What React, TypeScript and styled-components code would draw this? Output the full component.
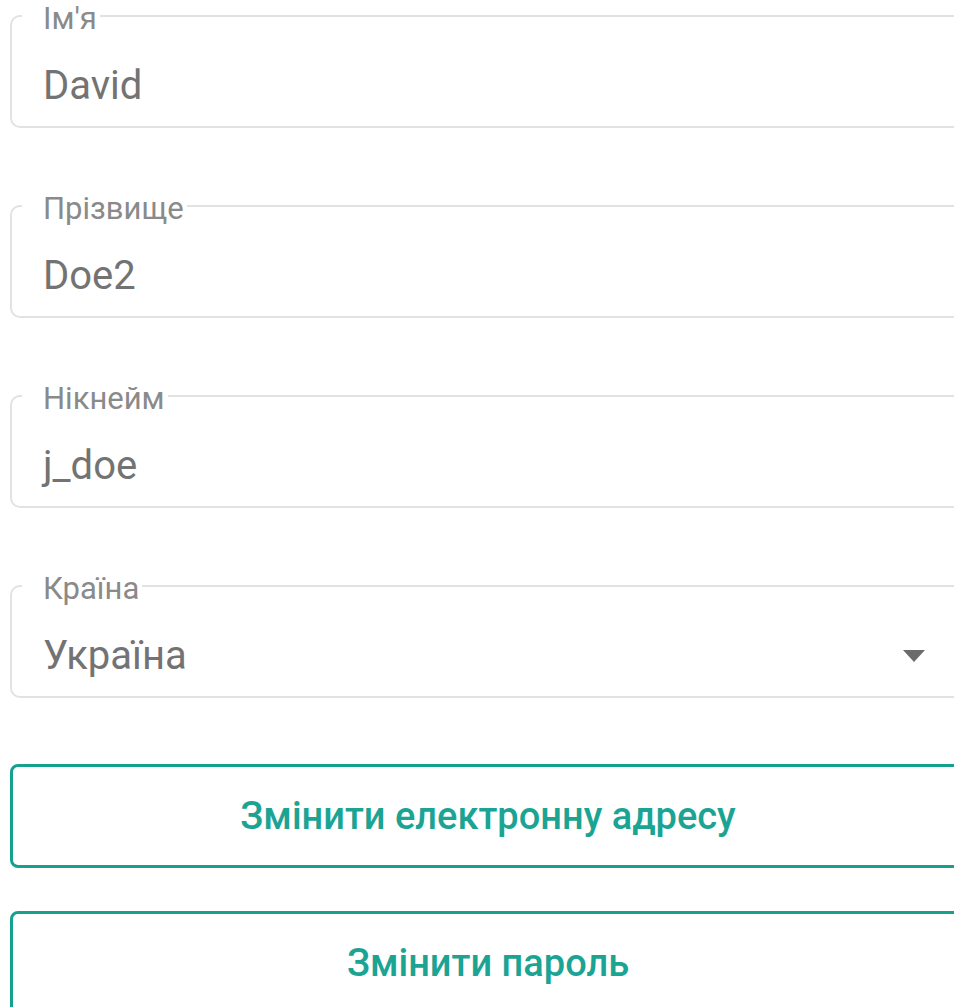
import styled, { createGlobalStyle } from 'styled-components';

const GlobalStyle = createGlobalStyle`
  html, body {
    margin: 0;
    padding: 0;
    background: #ffffff;
    overflow: hidden;
  }
  body {
    font-family: Roboto, 'Noto Sans', sans-serif;
  }
`;

const ProfileForm = styled.form`
  display: flex;
  flex-direction: column;
  width: 956px;
  margin-left: 10px;
  padding-top: 1px;
`;

const FieldList = styled.div`
  display: flex;
  flex-direction: column;
  gap: 63px;
`;

const Outline = styled.fieldset`
  margin: 0;
  padding: 0 0 0 10px;
  min-width: 0;
  border: 2px solid #e2e2e2;
  border-radius: 10px;
`;

const Legend = styled.legend`
  padding: 6px 3px 0 21px;
  font-size: 31px;
  line-height: 24px;
  color: #8a8a8a;
  white-space: nowrap;
`;

const ValueRow = styled.div`
  display: flex;
  align-items: center;
  justify-content: space-between;
  padding: 31px 39px 16px 21px;
`;

const Value = styled.span`
  font-size: 40px;
  line-height: 48px;
  color: #737373;
`;

const Caret = styled.svg`
  width: 22px;
  height: 12px;
  flex-shrink: 0;
  fill: #6b6b6b;
`;

const Actions = styled.div`
  display: flex;
  flex-direction: column;
  gap: 43px;
  margin-top: 66px;
`;

const OutlineButton = styled.button`
  display: flex;
  align-items: center;
  justify-content: center;
  height: 104px;
  padding: 0;
  border: 3px solid #16a08e;
  border-radius: 8px;
  background: #ffffff;
  color: #1ba493;
  font-family: Roboto, 'Noto Sans', sans-serif;
  font-size: 38px;
  font-weight: 500;
  cursor: pointer;
`;

type FieldProps = {
  label: string;
  value: string;
  select?: boolean;
};

const Field = ({ label, value, select }: FieldProps) => (
  <Outline>
    <Legend>{label}</Legend>
    <ValueRow>
      <Value>{value}</Value>
      {select && (
        <Caret viewBox="0 0 22 12">
          <path d="M0 0h22L11 12z" />
        </Caret>
      )}
    </ValueRow>
  </Outline>
);

const fields: FieldProps[] = [
  { label: "Ім'я", value: 'David' },
  { label: 'Прізвище', value: 'Doe2' },
  { label: 'Нікнейм', value: 'j_doe' },
  { label: 'Країна', value: 'Україна', select: true },
];

export default function App() {
  return (
    <>
      <GlobalStyle />
      <ProfileForm onSubmit={(e) => e.preventDefault()}>
        <FieldList>
          {fields.map((f) => (
            <Field key={f.label} {...f} />
          ))}
        </FieldList>
        <Actions>
          <OutlineButton type="button">Змінити електронну адресу</OutlineButton>
          <OutlineButton type="button">Змінити пароль</OutlineButton>
        </Actions>
      </ProfileForm>
    </>
  );
}
